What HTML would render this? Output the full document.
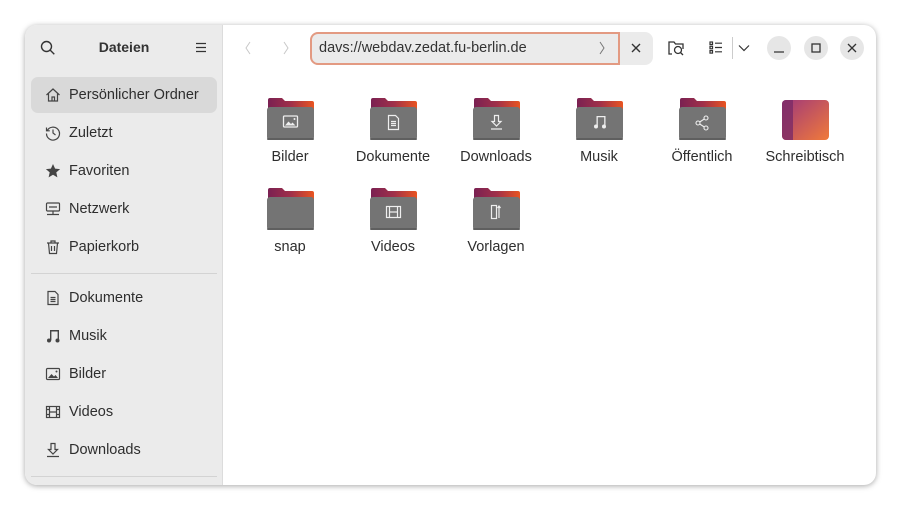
<!DOCTYPE html>
<html><head><meta charset="utf-8"><style>
*{box-sizing:border-box;margin:0;padding:0}
body{width:901px;height:510px;background:#fff;font-family:"Liberation Sans","DejaVu Sans",sans-serif;position:relative;overflow:hidden}
.win{position:absolute;left:25px;top:25px;width:851px;height:460px;border-radius:12px;background:#fff;box-shadow:0 1px 6px rgba(0,0,0,.35);overflow:hidden}
.side{position:absolute;left:0;top:0;width:198px;height:460px;background:#ebebeb;border-right:1px solid #dcdcdc}
.title{position:absolute;left:0;width:198px;top:14px;text-align:center;font-weight:bold;font-size:14px;color:#333}
.item{position:absolute;left:6px;width:186px;height:36px;border-radius:7px;font-size:14.5px;color:#2e2e2e;line-height:36px;padding-left:38px}
.item.sel{background:#d9d9d9}
.item svg{position:absolute;left:14px;top:10px}
.sep{position:absolute;left:6px;width:186px;height:1px;background:#d3d3d3}
.lbl{position:absolute;width:110px;text-align:center;font-size:14.5px;color:#2e2e2e}
.fold{position:absolute;width:48px;height:44px}
.btn{position:absolute;width:24px;height:24px;border-radius:12px;background:#e6e6e6}
</style></head><body>
<div class="win">
<div class="side">
 <svg style="position:absolute;left:15px;top:15px" width="16" height="16" viewBox="0 0 16 16" fill="none" stroke="#333" stroke-width="1.4"><circle cx="6.5" cy="6.5" r="5"/><path d="M10.3 10.3l4 4"/></svg>
 <div class="title">Dateien</div>
 <svg style="position:absolute;left:170px;top:17px" width="12" height="11" viewBox="0 0 12 11" stroke="#333" stroke-width="1.2"><path d="M1 1.5h10M1 5.5h10M1 9.5h10"/></svg>
 <div class="item sel" style="top:52px"><svg width="16" height="16" viewBox="0 0 16 16" fill="none" stroke="#444" stroke-width="1.2"><path d="M1.5 8L8 2l6.5 6M3.5 6.5V14h9V6.5M7 14v-4h2.5v4"/></svg>Persönlicher Ordner</div>
 <div class="item" style="top:90px"><svg width="16" height="16" viewBox="0 0 16 16" fill="none" stroke="#444" stroke-width="1.2"><path d="M2.3 5.5A6.5 6.5 0 1 1 1.5 8.5M1.5 2.5v3.3h3.3M8 4.5V8l2.5 2"/></svg>Zuletzt</div>
 <div class="item" style="top:128px"><svg width="16" height="16" viewBox="0 0 16 16"><path d="M8 1l2.1 4.6 5 .5-3.8 3.3 1.1 5L8 11.8 3.6 14.4l1.1-5L.9 6.1l5-.5z" fill="#444"/></svg>Favoriten</div>
 <div class="item" style="top:166px"><svg width="16" height="16" viewBox="0 0 16 16" fill="none" stroke="#444" stroke-width="1.2"><rect x="1.5" y="2" width="13" height="8" rx="1"/><path d="M4 6h8M8 10v3M2 13.5h12"/></svg>Netzwerk</div>
 <div class="item" style="top:204px"><svg width="16" height="16" viewBox="0 0 16 16" fill="none" stroke="#444" stroke-width="1.2"><path d="M2 4h12M6 4V2h4v2M3.5 4l1 10.5h7l1-10.5M6.5 7v5M9.5 7v5"/></svg>Papierkorb</div>
 <div class="sep" style="top:248px"></div>
 <div class="item" style="top:255px"><svg width="16" height="16" viewBox="0 0 16 16" fill="none" stroke="#444" stroke-width="1.2"><path d="M3 1.5h7l3 3v10H3zM5.5 7.5h5M5.5 9.5h5M5.5 11.5h5"/></svg>Dokumente</div>
 <div class="item" style="top:293px"><svg width="16" height="16" viewBox="0 0 16 16" fill="#444"><path d="M5 2h9v10.5h-1.4V3.5H6.4v9H5z"/><circle cx="4" cy="12.5" r="2"/><circle cx="12.5" cy="12.5" r="2"/></svg>Musik</div>
 <div class="item" style="top:331px"><svg width="16" height="16" viewBox="0 0 16 16"><rect x="1.5" y="2.5" width="13" height="11" rx="1" fill="none" stroke="#444" stroke-width="1.2"/><path d="M3 12l3.5-4 2.5 2.5 1.5-1.5L13 12z" fill="#444"/><circle cx="11.5" cy="5.5" r="1" fill="#444"/></svg>Bilder</div>
 <div class="item" style="top:369px"><svg width="16" height="16" viewBox="0 0 16 16" fill="none" stroke="#444" stroke-width="1.2"><rect x="1.5" y="2.5" width="13" height="11"/><path d="M4.5 2.5v11M11.5 2.5v11M4.5 8h7M1.5 5.5h3M1.5 10.5h3M11.5 5.5h3M11.5 10.5h3"/></svg>Videos</div>
 <div class="item" style="top:407px"><svg width="16" height="16" viewBox="0 0 16 16" fill="none" stroke="#444" stroke-width="1.2"><path d="M6 1.5h4v6h2.5L8 12 3.5 7.5H6zM2 14.5h12"/></svg>Downloads</div>
 <div class="sep" style="top:451px"></div>
</div>
<!-- header -->
<svg style="position:absolute;left:218px;top:15px" width="10" height="16" viewBox="0 0 10 16" fill="none" stroke="#c8c8c8" stroke-width="1"><path d="M7 2L3 8l4 6"/></svg>
<svg style="position:absolute;left:256px;top:15px" width="10" height="16" viewBox="0 0 10 16" fill="none" stroke="#c8c8c8" stroke-width="1"><path d="M3 2l4 6-4 6"/></svg>
<div style="position:absolute;left:285px;top:7px;width:343px;height:33px;border-radius:8px;background:#ebebeb"></div>
<div style="position:absolute;left:285px;top:7px;width:310px;height:33px;border:2px solid #e39a82;border-radius:8px 0 0 8px;background:#ebebeb;font-size:14.5px;color:#333;line-height:29px;padding-left:7px">davs://webdav.zedat.fu-berlin.de</div>
<svg style="position:absolute;left:573px;top:16px" width="8" height="14" viewBox="0 0 8 14" fill="none" stroke="#777" stroke-width="1"><path d="M2 1l4 6-4 6"/></svg>
<svg style="position:absolute;left:606px;top:18px" width="10" height="10" viewBox="0 0 10 10" stroke="#333" stroke-width="1.4"><path d="M1 1l8 8M9 1l-8 8"/></svg>
<svg style="position:absolute;left:642px;top:14px" width="18" height="18" viewBox="0 0 18 18" fill="none" stroke="#333" stroke-width="1.3"><path d="M5 15H2V3h5l1.5 2H16v5"/><circle cx="11" cy="11" r="3.5"/><path d="M13.5 13.5l2.5 2.5"/></svg>
<svg style="position:absolute;left:684px;top:16px" width="14" height="13" viewBox="0 0 14 13" fill="none" stroke="#333" stroke-width="1.2"><rect x="1" y="1" width="2.5" height="2.5"/><rect x="1" y="5.3" width="2.5" height="2.5"/><rect x="1" y="9.6" width="2.5" height="2.5"/><path d="M6 2.2h7M6 6.5h7M6 10.8h7"/></svg>
<div style="position:absolute;left:707px;top:12px;width:1px;height:22px;background:#ccc"></div>
<svg style="position:absolute;left:713px;top:19px" width="12" height="8" viewBox="0 0 12 8" fill="none" stroke="#333" stroke-width="1.2"><path d="M1 1.5l5 5 5-5"/></svg>
<div class="btn" style="left:742px;top:11px"><svg style="position:absolute;left:7px;top:15px" width="10" height="2"><path d="M0 1h10" stroke="#333" stroke-width="1.3"/></svg></div>
<div class="btn" style="left:779px;top:11px"><svg style="position:absolute;left:7px;top:7px" width="10" height="10"><rect x="1" y="1" width="8" height="8" fill="none" stroke="#333" stroke-width="1.3"/></svg></div>
<div class="btn" style="left:815px;top:11px"><svg style="position:absolute;left:7px;top:7px" width="10" height="10"><path d="M1 1l8 8M9 1l-8 8" stroke="#333" stroke-width="1.3"/></svg></div>
</div>

<svg width="0" height="0" style="position:absolute"><defs>
<linearGradient id="tab" x1="0" x2="1"><stop offset="0" stop-color="#7a2152"/><stop offset=".5" stop-color="#a0304a"/><stop offset="1" stop-color="#e95420"/></linearGradient>
<linearGradient id="desk" x1="0" y1="0" x2="1" y2="1"><stop offset="0" stop-color="#a0387a"/><stop offset="1" stop-color="#f07a3a"/></linearGradient>
<g id="f"><path d="M1 3a2 2 0 0 1 2-2h12l3 3h27a2 2 0 0 1 2 2v12H1z" fill="url(#tab)"/><rect x="0" y="10" width="47" height="33" rx="3" fill="#747474"/><rect x="0" y="41" width="47" height="2" rx="1" fill="#5f5f5f"/></g>
</defs></svg>

<!-- row1 -->
<svg class="fold" style="left:267px;top:97px"><use href="#f"/><g fill="none" stroke="#eee" stroke-width="1.3"><rect x="16.5" y="19" width="14" height="11" rx="1"/></g><path d="M18 28.5l3.5-4 2.5 2.5 1.5-1.5 3 3z" fill="#eee"/><circle cx="27.5" cy="22" r="1" fill="#eee"/></svg>
<svg class="fold" style="left:370px;top:97px"><use href="#f"/><path d="M18.5 18.5h7l3 3v11h-10z M21 24.5h5M21 26.5h5M21 28.5h5" fill="none" stroke="#eee" stroke-width="1.2"/></svg>
<svg class="fold" style="left:473px;top:97px"><use href="#f"/><path d="M21.5 18.5h4v6H28L23.5 29 19 24.5h2.5zM18 32h11" fill="none" stroke="#eee" stroke-width="1.2"/></svg>
<svg class="fold" style="left:576px;top:97px"><use href="#f"/><path d="M20.5 19h9v10h-1.3v-8.7h-6.4v8.7h-1.3z" fill="#eee"/><circle cx="20" cy="29.5" r="2" fill="#eee"/><circle cx="28" cy="29.5" r="2" fill="#eee"/></svg>
<svg class="fold" style="left:679px;top:97px"><use href="#f"/><g fill="none" stroke="#eee" stroke-width="1.1"><circle cx="19" cy="26" r="2"/><circle cx="27" cy="21" r="2"/><circle cx="27" cy="31" r="2"/><path d="M20.7 25l4.6-3M20.7 27l4.6 3"/></g></svg>
<svg class="fold" style="left:782px;top:97px"><rect x="0" y="3" width="47" height="40" rx="4" fill="url(#desk)"/><path d="M4 3h7v40H4a4 4 0 0 1-4-4V7a4 4 0 0 1 4-4z" fill="#7a2a66" opacity=".8"/></svg>
<div class="lbl" style="left:235px;top:149px">Bilder</div>
<div class="lbl" style="left:338px;top:149px">Dokumente</div>
<div class="lbl" style="left:441px;top:149px">Downloads</div>
<div class="lbl" style="left:544px;top:149px">Musik</div>
<div class="lbl" style="left:647px;top:149px">Öffentlich</div>
<div class="lbl" style="left:750px;top:149px">Schreibtisch</div>
<!-- row2 -->
<svg class="fold" style="left:267px;top:187px"><use href="#f"/></svg>
<svg class="fold" style="left:370px;top:187px"><use href="#f"/><g fill="none" stroke="#eee" stroke-width="1.2"><rect x="16.5" y="19.5" width="14" height="11"/><path d="M19.5 19.5v11M27.5 19.5v11M19.5 25h8"/></g></svg>
<svg class="fold" style="left:473px;top:187px"><use href="#f"/><g fill="none" stroke="#eee" stroke-width="1.2"><rect x="18.5" y="18.5" width="5" height="13"/><path d="M26 19v12M24.5 21l1.5-2 1.5 2"/></g></svg>
<div class="lbl" style="left:235px;top:239px">snap</div>
<div class="lbl" style="left:338px;top:239px">Videos</div>
<div class="lbl" style="left:441px;top:239px">Vorlagen</div>
</body></html>
